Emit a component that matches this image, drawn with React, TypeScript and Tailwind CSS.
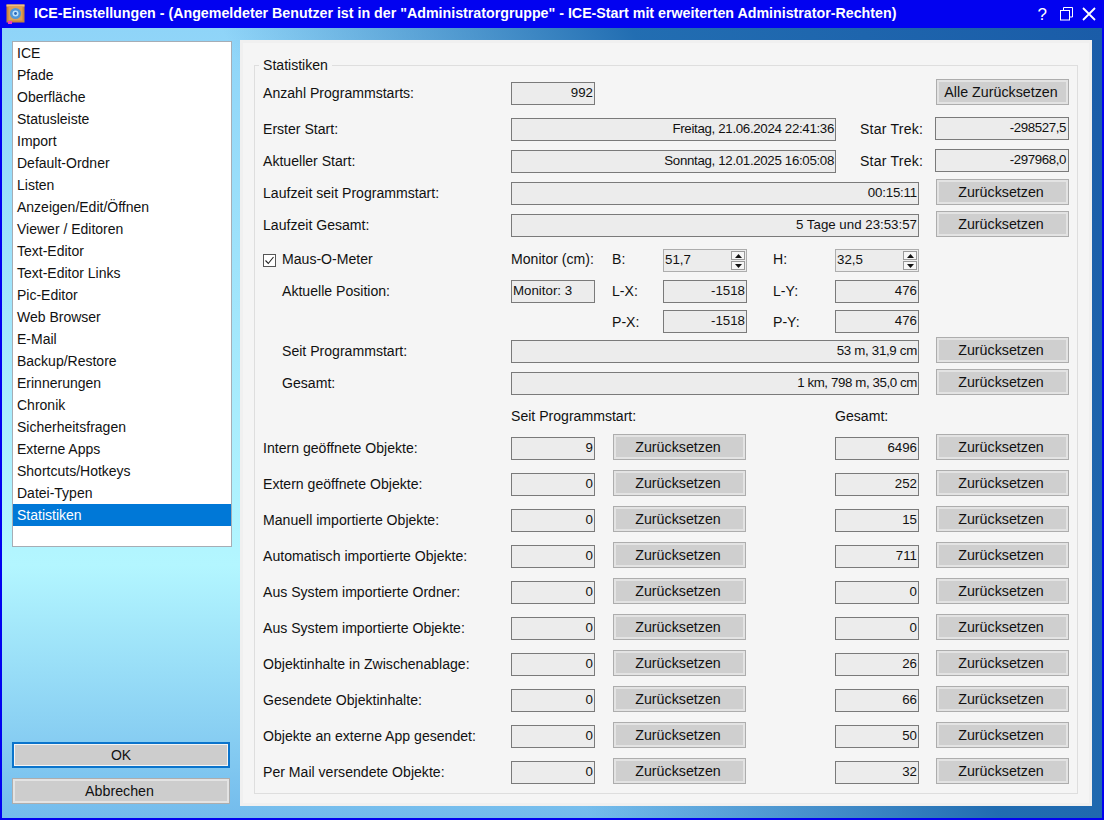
import React from "react";

const listItems = [
  "ICE","Pfade","Oberfläche","Statusleiste","Import","Default-Ordner","Listen","Anzeigen/Edit/Öffnen","Viewer / Editoren","Text-Editor","Text-Editor Links","Pic-Editor","Web Browser","E-Mail","Backup/Restore","Erinnerungen","Chronik","Sicherheitsfragen","Externe Apps","Shortcuts/Hotkeys","Datei-Typen","Statistiken",
];

const stats: [string, string, string][] = [
  ["Intern geöffnete Objekte:", "9", "6496"],
  ["Extern geöffnete Objekte:", "0", "252"],
  ["Manuell importierte Objekte:", "0", "15"],
  ["Automatisch importierte Objekte:", "0", "711"],
  ["Aus System importierte Ordner:", "0", "0"],
  ["Aus System importierte Objekte:", "0", "0"],
  ["Objektinhalte in Zwischenablage:", "0", "26"],
  ["Gesendete Objektinhalte:", "0", "66"],
  ["Objekte an externe App gesendet:", "0", "50"],
  ["Per Mail versendete Objekte:", "0", "32"],
];

function Field({ children, className = "", left = false }: { children: React.ReactNode; className?: string; left?: boolean }) {
  return (
    <div className={`h-[23px] shrink-0 whitespace-nowrap border border-[#7a7a7a] bg-[#ececec] px-[1px] text-[13.3px] leading-[20px] text-[#111] ${left ? "text-left" : "text-right"} ${className}`}>
      {children}
    </div>
  );
}

function Btn({ label = "Zurücksetzen", className = "w-[133px]" }: { label?: string; className?: string }) {
  return (
    <div className={`h-[26px] shrink-0 border border-[#adadad] bg-[#e3e3e3] p-[2px] ${className}`}>
      <div className="flex h-full items-center justify-center bg-[#cfcfcf] pr-[3px] pt-[1px] text-[14.25px] text-[#111]">{label}</div>
    </div>
  );
}

function Spin({ value }: { value: string }) {
  return (
    <div className="flex h-[23px] w-[84px] items-center justify-between border border-[#adadad] bg-[#ececec] px-[1px] text-[13.3px] text-[#111]">
      <span className="pb-[2px]">{value}</span>
      <div className="flex flex-col gap-px">
        <div className="flex h-[9px] w-[14px] items-center justify-center border border-[#9a9a9a] bg-[#f6f6f6]">
          <svg width="7" height="4" viewBox="0 0 7 4"><path d="M3.5 0 7 4H0z" fill="#111" /></svg>
        </div>
        <div className="flex h-[9px] w-[14px] items-center justify-center border border-[#9a9a9a] bg-[#f6f6f6]">
          <svg width="7" height="4" viewBox="0 0 7 4"><path d="M0 0h7L3.5 4z" fill="#111" /></svg>
        </div>
      </div>
    </div>
  );
}

const wideRow = "flex h-[26px] items-end";
const labelBox = "flex h-[23px] shrink-0 items-center whitespace-nowrap";

export default function App() {
  return (
    <div className="flex h-[820px] w-[1104px] flex-col overflow-hidden bg-[#0202f0] font-['Liberation_Sans',Arial,sans-serif] text-[14px] text-[#111]">
      {/* Title bar */}
      <div className="flex h-[28px] shrink-0 items-center pl-[6px] text-white">
        <svg width="20" height="20" viewBox="0 0 20 20" className="shrink-0">
          <rect x="0.5" y="0.5" width="18" height="18" fill="#c9843c" />
          <rect x="0.5" y="0.5" width="18" height="2" fill="#f0c080" />
          <rect x="2.5" y="2.5" width="14" height="14" fill="#dc9f58" />
          <circle cx="9.5" cy="9.5" r="5.5" fill="#4f96d8" />
          <circle cx="9.5" cy="9.5" r="3" fill="#bfe2fa" />
          <circle cx="9.5" cy="9.5" r="1.4" fill="#2766b8" />
          <rect x="2" y="17" width="4" height="3" fill="#ee3fb4" />
        </svg>
        <div className="ml-[8px] whitespace-nowrap text-[14.24px] font-bold">
          ICE-Einstellungen - (Angemeldeter Benutzer ist in der "Administratorgruppe" - ICE-Start mit erweiterten Administrator-Rechten)
        </div>
        <div className="ml-auto flex items-center pr-[8px]">
          <span className="text-[17px] leading-none">?</span>
          <svg width="13" height="14" viewBox="0 0 13 14" className="ml-[13px]" fill="none" stroke="#fff" strokeWidth="1">
            <rect x="0.5" y="3.5" width="9" height="9.5" />
            <path d="M3.5 3.5V.5h9v9.5h-3" />
          </svg>
          <svg width="14" height="14" viewBox="0 0 14 14" className="ml-[9px]" fill="none" stroke="#fff" strokeWidth="1.8">
            <path d="M1 1l12 12M13 1 1 13" />
          </svg>
        </div>
      </div>

      {/* Client area */}
      <div className="mx-[2px] mb-[2px] flex min-h-0 flex-1 bg-[linear-gradient(65deg,rgba(28,100,172,0)_40%,rgba(28,104,174,0.95)_68%,#1a5ca8_100%),linear-gradient(180deg,#8fd4f8_0%,#b3f6ff_68%,#73bbec_100%)] pt-[12px]">
        {/* Left */}
        <div className="ml-[10px] flex w-[220px] shrink-0 flex-col">
          <div className="mt-px h-[506px] border border-[#a6adb5] bg-white">
            {listItems.map((t) => (
              <div
                key={t}
                className={`h-[22px] whitespace-nowrap pl-[4px] leading-[22px] ${t === "Statistiken" ? "bg-[#0078d7] text-white" : "text-[#111]"}`}
              >
                {t}
              </div>
            ))}
          </div>
          <div className="mt-[195px] flex h-[26px] w-[218px] items-center justify-center border-2 border-[#0a74cc] bg-[#cdcdcd] shadow-[inset_0_0_0_1px_#f4f4f4]">OK</div>
          <div className="mt-[10px] flex h-[26px] w-[218px] items-center justify-center border border-[#adadad] bg-[#cdcdcd] pr-[3px] pt-[1px] shadow-[inset_0_0_0_2px_#e3e3e3] text-[14.25px]">Abbrechen</div>
        </div>

        {/* Right panel */}
        <div className="ml-[8px] h-[766px] w-[852px] shrink-0 border-[3px] border-[#f0f0f0] bg-[#f5f5f5] px-[11px] pb-[9px] pt-[22px] text-[14.08px]">
          <div className="relative h-[729px] border border-[#dedede] px-[8px] pt-[13px]">
            <div className="absolute left-[4px] top-[-10px] bg-[#f5f5f5] px-[4px] leading-[18px]">Statistiken</div>

            <div className={wideRow}>
              <div className={`${labelBox} w-[248px]`}>Anzahl Programmstarts:</div>
              <Field className="w-[84px]">992</Field>
              <Btn label="Alle Zurücksetzen" className="ml-auto w-[133px]" />
            </div>

            <div className="mt-[13px] flex h-[23px] items-end">
              <div className={`${labelBox} w-[248px]`}>Erster Start:</div>
              <Field className="w-[325px] tracking-[-0.33px]">Freitag, 21.06.2024 22:41:36</Field>
              <div className={`${labelBox} ml-[24px] tracking-[0.2px]`}>Star Trek:</div>
              <Field className="ml-auto w-[134px] -translate-y-[1px] pr-[2px] tracking-[-0.4px]">-298527,5</Field>
            </div>

            <div className="mt-[9px] flex h-[23px] items-end">
              <div className={`${labelBox} w-[248px]`}>Aktueller Start:</div>
              <Field className="w-[325px] tracking-[-0.33px]">Sonntag, 12.01.2025 16:05:08</Field>
              <div className={`${labelBox} ml-[24px] tracking-[0.2px]`}>Star Trek:</div>
              <Field className="ml-auto w-[134px] -translate-y-[1px] pr-[2px] tracking-[-0.4px]">-297968,0</Field>
            </div>

            <div className={`${wideRow} mt-[6px]`}>
              <div className={`${labelBox} w-[248px]`}>Laufzeit seit Programmstart:</div>
              <Field className="w-[408px] tracking-[-0.2px]">00:15:11</Field>
              <Btn className="ml-auto w-[133px]" />
            </div>

            <div className={`${wideRow} mt-[6px]`}>
              <div className={`${labelBox} w-[248px]`}>Laufzeit Gesamt:</div>
              <Field className="w-[408px]">5 Tage und 23:53:57</Field>
              <Btn className="ml-auto w-[133px]" />
            </div>

            {/* Maus-O-Meter block */}
            <div className="mt-[12px] grid grid-cols-[248px_101px_51px_84px_26px_62px_84px] grid-rows-[23px_24px_23px] items-end gap-y-[7px]">
              <div className="flex items-center self-center whitespace-nowrap">
                <div className="flex h-[13px] w-[13px] items-center justify-center border border-[#555] bg-white">
                  <svg width="11" height="11" viewBox="0 0 11 11" fill="none" stroke="#222" strokeWidth="1.1"><path d="M1.5 5.5 4.3 8.5 9.5 2" /></svg>
                </div>
                <span className="ml-[6px] -translate-y-[1px]">Maus-O-Meter</span>
              </div>
              <div className="-translate-y-[1px] self-center whitespace-nowrap">Monitor (cm):</div>
              <div className="-translate-y-[1px] self-center">B:</div>
              <Spin value="51,7" />
              <div />
              <div className="-translate-y-[1px] self-center">H:</div>
              <Spin value="32,5" />

              <div className="translate-y-[1px] self-center pl-[19px]">Aktuelle Position:</div>
              <Field left className="w-[84px]">Monitor: 3</Field>
              <div className="col-start-3 translate-y-[1px] self-center">L-X:</div>
              <Field className="w-[84px]">-1518</Field>
              <div />
              <div className="translate-y-[1px] self-center">L-Y:</div>
              <Field className="w-[84px]">476</Field>

              <div className="col-start-3 translate-y-[1px] self-center">P-X:</div>
              <Field className="w-[84px]">-1518</Field>
              <div />
              <div className="translate-y-[1px] self-center">P-Y:</div>
              <Field className="w-[84px]">476</Field>
            </div>

            <div className={`${wideRow} mt-[4px]`}>
              <div className={`${labelBox} w-[248px] pl-[19px]`}>Seit Programmstart:</div>
              <Field className="w-[408px] tracking-[-0.3px]">53 m, 31,9 cm</Field>
              <Btn className="ml-auto w-[133px]" />
            </div>

            <div className={`${wideRow} mt-[6px]`}>
              <div className={`${labelBox} w-[248px] pl-[19px]`}>Gesamt:</div>
              <Field className="w-[408px] tracking-[-0.4px]">1 km, 798 m, 35,0 cm</Field>
              <Btn className="ml-auto w-[133px]" />
            </div>

            <div className="mt-[12px] grid h-[18px] grid-cols-[248px_324px_auto] leading-[18px]">
              <div />
              <div>Seit Programmstart:</div>
              <div>Gesamt:</div>
            </div>

            <div className="mt-[9px] flex flex-col gap-[10px]">
              {stats.map(([label, a, b]) => (
                <div key={label} className="grid h-[26px] grid-cols-[248px_84px_18px_133px_89px_84px_17px_133px] items-end">
                  <div className={labelBox}>{label}</div>
                  <Field>{a}</Field>
                  <div />
                  <Btn className="w-[133px]" />
                  <div />
                  <Field>{b}</Field>
                  <div />
                  <Btn className="w-[133px]" />
                </div>
              ))}
            </div>
          </div>
        </div>
      </div>
    </div>
  );
}
